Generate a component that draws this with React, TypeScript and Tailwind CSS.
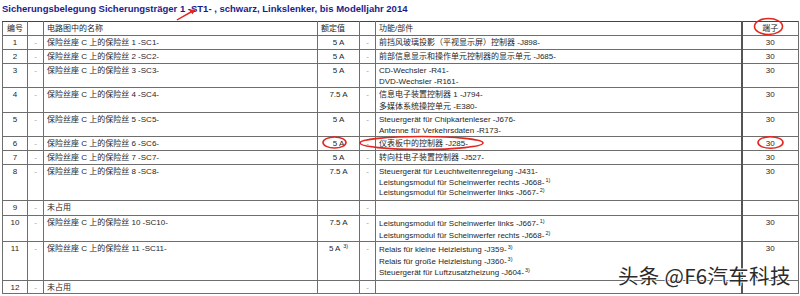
import type { ReactNode } from "react";

type FuseRow = {
  no: string;
  name: string;
  rating?: ReactNode;
  func: ReactNode[];
  term?: string;
  h: string;
  lead?: string;
};

const S = ({ children }: { children: ReactNode }) => (
  <sup className="text-[5.5px] ml-[1px]">{children}</sup>
);

const ROWS: FuseRow[] = [
  { no: "1", name: "保险丝座 C 上的保险丝 1 -SC1-", rating: "5 A", func: ["前挡风玻璃投影（平视显示屏）控制器 -J898-"], term: "30", h: "h-[14px]" },
  { no: "2", name: "保险丝座 C 上的保险丝 2 -SC2-", rating: "5 A", func: ["前部信息显示和操作单元控制器的显示单元 -J685-"], term: "30", h: "h-[14px]" },
  { no: "3", name: "保险丝座 C 上的保险丝 3 -SC3-", rating: "5 A", func: ["CD-Wechsler -R41-", "DVD-Wechsler -R161-"], term: "30", h: "h-[23px]", lead: "leading-[10.5px] pt-[2px]" },
  { no: "4", name: "保险丝座 C 上的保险丝 4 -SC4-", rating: "7.5 A", func: ["信息电子装置控制器 1 -J794-", "多媒体系统操控单元 -E380-"], term: "30", h: "h-[25px]", lead: "leading-[11.5px]" },
  { no: "5", name: "保险丝座 C 上的保险丝 5 -SC5-", rating: "5 A", func: ["Steuergerät für Chipkartenleser -J676-", "Antenne für Verkehrsdaten -R173-"], term: "30", h: "h-[23px]", lead: "leading-[10.5px] pt-[2px]" },
  { no: "6", name: "保险丝座 C 上的保险丝 6 -SC6-", rating: "5 A", func: ["仪表板中的控制器 -J285-"], term: "30", h: "h-[14px]" },
  { no: "7", name: "保险丝座 C 上的保险丝 7 -SC7-", rating: "5 A", func: ["转向柱电子装置控制器 -J527-"], term: "30", h: "h-[14px]" },
  {
    no: "8",
    name: "保险丝座 C 上的保险丝 8 -SC8-",
    rating: "7.5 A",
    func: [
      "Steuergerät für Leuchtweitenregelung -J431-",
      <>Leistungsmodul für Scheinwerfer rechts -J668-<S>1)</S></>,
      <>Leistungsmodul für Scheinwerfer links -J667-<S>2)</S></>,
    ],
    term: "30",
    h: "h-[36px]",
    lead: "leading-[10.5px] pt-[2px]",
  },
  { no: "9", name: "未占用", func: [], h: "h-[15px]" },
  {
    no: "10",
    name: "保险丝座 C 上的保险丝 10 -SC10-",
    rating: "7.5 A",
    func: [
      <>Leistungsmodul für Scheinwerfer links -J667-<S>1)</S></>,
      <>Leistungsmodul für Scheinwerfer rechts -J668-<S>2)</S></>,
    ],
    term: "30",
    h: "h-[25px]",
    lead: "leading-[11.5px] pt-[2px]",
  },
  {
    no: "11",
    name: "保险丝座 C 上的保险丝 11 -SC11-",
    rating: <>5 A <S>3)</S></>,
    func: [
      <>Relais für kleine Heizleistung -J359-<S>3)</S></>,
      <>Relais für große Heizleistung -J360-<S>3)</S></>,
      <>Steuergerät für Luftzusatzheizung -J604-<S>3)</S></>,
    ],
    term: "30",
    h: "h-[39px]",
    lead: "leading-[11.5px] pt-[2px]",
  },
  { no: "12", name: "未占用", func: [], h: "h-[13px]" },
];

const cell = "border border-[#6e6e6e] align-top p-0 pt-[1px]";

export default function App() {
  return (
    <div
      className="relative w-[800px] h-[296px] overflow-hidden bg-white text-[#262626]"
      style={{ fontFamily: '"Liberation Sans", "Noto Sans CJK SC", sans-serif' }}
    >
      <div className="pt-[3px] pl-[2px] pb-[6px] text-[9.5px] leading-[12px] font-bold text-[#1c1c8a] whitespace-nowrap">
        Sicherungsbelegung Sicherungsträger 1 -ST1- , schwarz, Linkslenker, bis Modelljahr 2014
      </div>

      <table className="ml-[2px] w-[796px] table-fixed border-collapse text-[8px] leading-[11px]">
        <colgroup>
          <col className="w-[25px]" />
          <col className="w-[16px]" />
          <col className="w-[274px]" />
          <col className="w-[42px]" />
          <col className="w-[16px]" />
          <col className="w-[366px]" />
          <col className="w-[57px]" />
        </colgroup>
        <thead>
          <tr className="h-[14px]">
            <th className={`${cell} font-normal text-center border-t-[#444]`}>编号</th>
            <th className={`${cell} border-t-[#444]`}></th>
            <th className={`${cell} font-normal text-left pl-[3px] border-t-[#444]`}>电路图中的名称</th>
            <th className={`${cell} font-normal text-left pl-[3px] border-t-[#444]`}>额定值</th>
            <th className={`${cell} border-t-[#444]`}></th>
            <th className={`${cell} font-normal text-left pl-[3px] border-t-[#444]`}>功能/部件</th>
            <th className={`${cell} font-normal text-center border-t-[#444] border-l-2 border-l-[#555]`}>端子</th>
          </tr>
        </thead>
        <tbody>
          {ROWS.map((r) => (
            <tr key={r.no} className={r.h}>
              <td className={`${cell} text-center`}>{r.no}</td>
              <td className={`${cell} text-center text-[#9a9a9a]`}>-</td>
              <td className={`${cell} pl-[3px] whitespace-nowrap`}>{r.name}</td>
              <td className={`${cell} text-center whitespace-nowrap`}>{r.rating}</td>
              <td className={`${cell} text-center text-[#9a9a9a]`}>-</td>
              <td className={`${cell} pl-[3px] whitespace-nowrap ${r.lead ?? ""}`}>
                {r.func.map((f, i) => (
                  <div key={i}>{f}</div>
                ))}
              </td>
              <td className={`${cell} text-center border-l-2 border-l-[#555]`}>{r.term}</td>
            </tr>
          ))}
        </tbody>
      </table>

      {/* red markings drawn over the scan */}
      <svg className="absolute inset-0 pointer-events-none" width="800" height="296" viewBox="0 0 800 296">
        <g fill="none" stroke="#e3261f" strokeWidth="1.6">
          <ellipse cx="768.5" cy="26.5" rx="14" ry="8" />
          <ellipse cx="334.5" cy="142.5" rx="11.5" ry="5.5" />
          <ellipse cx="421.5" cy="143" rx="61.5" ry="6.5" />
          <ellipse cx="770.5" cy="142.5" rx="12.5" ry="5.8" />
        </g>
        <polygon
          points="176.5,19.6 190.2,11.6 189,9.8 196,9.2 192.6,14.2 191.3,12.8 177.3,20.6"
          fill="#e3261f"
        />
      </svg>

      <div
        className="absolute left-[618px] top-[265px] text-[20.5px] leading-none tracking-[0.3px] text-[#2b2b2b] whitespace-nowrap"
        style={{
          fontFamily: '"Noto Sans CJK SC", sans-serif',
          textShadow: "1px 0 #fff, -1px 0 #fff, 0 1px #fff, 0 -1px #fff",
        }}
      >
        头条 @F6汽车科技
      </div>
    </div>
  );
}
